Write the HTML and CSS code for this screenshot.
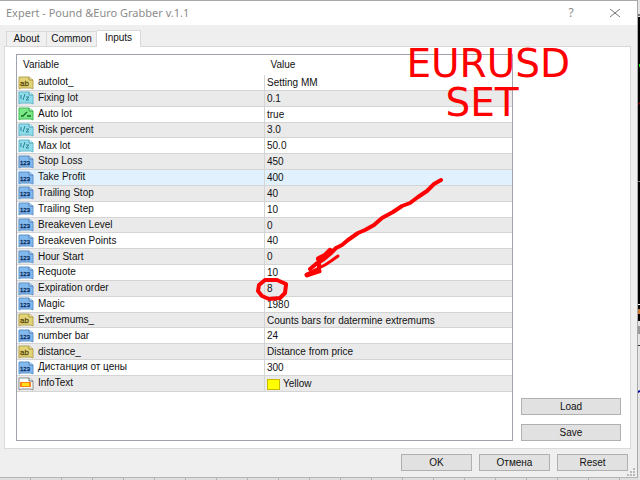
FILE: index.html
```html
<!DOCTYPE html>
<html lang="en">
  <head>
    <meta charset="utf-8">
    <title>Expert - Pound &amp;Euro Grabber v.1.1</title>
    <link rel="stylesheet" href="styles.css">
  </head>
  <body>
    <svg class="sprite" aria-hidden="true">
      <symbol id="ab" viewBox="0 0 16 14">
        <path d="M1 1h10l4 3v9l-2-1H3l-2 1z" fill="#e3d478" stroke="#b5a452"/>
        <path d="M11 1v3h4" fill="#f8efb0" stroke="#a3923f"/>
        <text x="2" y="10" font-size="8" fill="#5d4f13" stroke="#5d4f13" stroke-width=".3">ab</text>
      </symbol>
      <symbol id="half" viewBox="0 0 16 14">
        <path d="M1 1h10l4 3v9l-2-1H3l-2 1z" fill="#8fdcea" stroke="#63b8ca"/>
        <path d="M11 1v3h4" fill="#d4f6fb" stroke="#4ba0b3"/>
        <path d="M3 4v4M7 3L5 9M8 6h3L8 9h3" fill="none" stroke="#2a8297"/>
      </symbol>
      <symbol id="bool" viewBox="0 0 16 14">
        <path d="M1 1h10l4 3v9l-2-1H3l-2 1z" fill="#7be886" stroke="#43b856"/>
        <path d="M11 1v3h4" fill="#c6fbca" stroke="#2f9c44"/>
        <path d="M3 9h2l4-4M9 9h4" fill="none" stroke="#136b24" stroke-width="1.3"/>
      </symbol>
      <symbol id="int" viewBox="0 0 16 14">
        <path d="M1 1h10l4 3v9l-2-1H3l-2 1z" fill="#84b9ee" stroke="#5e93cb"/>
        <path d="M11 1v3h4" fill="#c9e3fc" stroke="#4a7db5"/>
        <text x="2" y="10" font-size="6" fill="#082a5c" stroke="#082a5c" stroke-width=".3">123</text>
      </symbol>
      <symbol id="color" viewBox="0 0 16 14">
        <path d="M1 1h10l4 3v9l-2-1H3l-2 1z" fill="#fff" stroke="#8b8b8b"/>
        <path d="M11 1v3h4" fill="#fff" stroke="#666"/>
        <path d="M2 5h11v5H2z" fill="#ff8412"/>
        <path d="M4 6h7v3H4z" fill="#ffe019"/>
      </symbol>
    </svg>

    <main class="dialog">
      <header class="titlebar">
        <h1>Expert - Pound &amp;Euro Grabber v.1.1</h1>
        <button class="help" aria-label="Help">?</button>
        <button class="close" aria-label="Close">
          <svg width="10" height="8" viewBox="0 0 10 8"><path d="M0 0l10 8M10 0L0 8" stroke="#777"/></svg>
        </button>
      </header>

      <nav class="tabs" role="tablist">
        <button role="tab">About</button>
        <button role="tab">Common</button>
        <button role="tab" class="active" aria-selected="true">Inputs</button>
      </nav>

      <section class="panel">
        <div class="list">
          <table>
            <thead>
              <tr><th>Variable</th><th>Value</th></tr>
            </thead>
            <tbody>
              <tr><td><svg class="icon"><use href="#ab"/></svg>autolot_</td><td>Setting MM</td></tr>
              <tr><td><svg class="icon"><use href="#half"/></svg>Fixing lot</td><td>0.1</td></tr>
              <tr><td><svg class="icon"><use href="#bool"/></svg>Auto lot</td><td>true</td></tr>
              <tr><td><svg class="icon"><use href="#half"/></svg>Risk percent</td><td>3.0</td></tr>
              <tr><td><svg class="icon"><use href="#half"/></svg>Max lot</td><td>50.0</td></tr>
              <tr><td><svg class="icon"><use href="#int"/></svg>Stop Loss</td><td>450</td></tr>
              <tr class="selected"><td><svg class="icon"><use href="#int"/></svg>Take Profit</td><td>400</td></tr>
              <tr><td><svg class="icon"><use href="#int"/></svg>Trailing Stop</td><td>40</td></tr>
              <tr><td><svg class="icon"><use href="#int"/></svg>Trailing Step</td><td>10</td></tr>
              <tr><td><svg class="icon"><use href="#int"/></svg>Breakeven Level</td><td>0</td></tr>
              <tr><td><svg class="icon"><use href="#int"/></svg>Breakeven Points</td><td>40</td></tr>
              <tr><td><svg class="icon"><use href="#int"/></svg>Hour Start</td><td>0</td></tr>
              <tr><td><svg class="icon"><use href="#int"/></svg>Requote</td><td>10</td></tr>
              <tr><td><svg class="icon"><use href="#int"/></svg>Expiration order</td><td>8</td></tr>
              <tr><td><svg class="icon"><use href="#int"/></svg>Magic</td><td>1980</td></tr>
              <tr><td><svg class="icon"><use href="#ab"/></svg>Extremums_</td><td>Counts bars for datermine extremums</td></tr>
              <tr><td><svg class="icon"><use href="#int"/></svg>number bar</td><td>24</td></tr>
              <tr><td><svg class="icon"><use href="#ab"/></svg>distance_</td><td>Distance from price</td></tr>
              <tr><td><svg class="icon"><use href="#int"/></svg>Дистанция от цены</td><td>300</td></tr>
              <tr><td><svg class="icon"><use href="#color"/></svg>InfoText</td><td><span class="swatch"></span>Yellow</td></tr>
            </tbody>
          </table>
        </div>
        <div class="side">
          <button class="btn">Load</button>
          <button class="btn">Save</button>
        </div>
      </section>

      <footer class="actions">
        <button class="btn">OK</button>
        <button class="btn">Отмена</button>
        <button class="btn">Reset</button>
      </footer>
      <svg class="grip" width="8" height="8" fill="#bbb"><path d="M6 0h2v2H6zM3 3h2v2H3zM6 3h2v2H6zM0 6h2v2H0zM3 6h2v2H3zM6 6h2v2H6z"/></svg>
    </main>

    <!-- chart window showing behind the dialog -->
    <svg class="chart-right" viewBox="0 0 2 480" preserveAspectRatio="none" aria-hidden="true">
      <path d="M0 0h2v480H0z" fill="#e3e3e3"/>
      <path d="M0 14h2v2H0z" fill="#777"/>
      <path d="M0 17h2v304H0z" fill="#000"/>
      <path d="M1 64h1v3H1z" fill="#0d0"/>
      <path d="M0 104l2-2v1l-2 2z" fill="#c00"/>
      <path d="M0 181h2v1H0z" fill="#778"/>
      <path d="M0 304h2v1H0z" fill="#fff"/>
      <path d="M0 309h2v5H0z" fill="#c77a30"/>
      <path d="M0 326h2v8H0z" fill="#999"/>
      <path d="M0 345h2v1H0z" fill="#333"/>
      <path d="M0 391l2-1v2l-2 1z" fill="#00a"/>
    </svg>
    <div class="chart-bottom"></div>

    <p class="note">EURUSD<br>SET&nbsp;</p>
    <svg class="marks" viewBox="0 0 200 130" fill="none" stroke="#f00" stroke-linecap="round" stroke-linejoin="round" aria-hidden="true">
      <path stroke-width="4" d="M191 9l-7 4-7 7-9 6-8 6-8 3-9 6-11 6-8 7-9 5-7 3-10 7-6 5-6 3-6 6-6 5-8 5-6 5"/>
      <path stroke-width="6" d="M80 80l-5 5-6 3"/>
      <path stroke-width="4" d="M69 88v12"/>
      <path stroke-width="5" d="M69 100l-6 2-6 2"/>
      <path stroke-width="3" d="M88 85l-7 5-6 4-6 3-12 6"/>
      <path stroke-width="4" d="M36 113l-9-4-12 0-6 5-1 6 4 5 7 3 11-1 5-5 1-8z"/>
    </svg>
  </body>
</html>
```

FILE: styles.css
```css
* {
  box-sizing: border-box;
}

body {
  margin: 0;
  min-height: 100vh;
  display: grid;
  grid-template-columns: 1fr 2px;
  grid-template-rows: 1fr 2px;
  position: relative;
  overflow: hidden;
  font-family: "Liberation Sans", Arial, sans-serif;
  font-size: 10px;
  line-height: 14px;
  color: #111;
}

button {
  font: inherit;
  color: inherit;
  padding: 0;
}

.sprite {
  display: none;
}

.dialog {
  position: relative;
  display: flex;
  flex-direction: column;
  background: #efefef;
  border-top: 1px solid #aaa;
  border-right: 1px solid #aaa;
  border-bottom: 1px solid #b5b5b5;
}

.titlebar {
  display: flex;
  align-items: center;
  height: 24px;
  padding: 0 12px 0 6px;
  background: #fff;
  color: #8c8c8c;
}

.titlebar h1 {
  flex: 1;
  margin: 0;
  font: 11px/16px "Noto Sans", sans-serif;
}

.titlebar button {
  display: flex;
  align-items: center;
  justify-content: center;
  width: 20px;
  height: 20px;
  border: 0;
  background: none;
}

.titlebar .help {
  margin-right: 24px;
  font: 12px/16px "Noto Sans", sans-serif;
}

.tabs {
  display: flex;
  align-items: flex-end;
  height: 21px;
  padding-left: 6px;
}

.tabs button {
  height: 15px;
  width: 41px;
  border: 1px solid #d9d9d9;
  border-bottom: 0;
  background: #f0f0f0;
}

.tabs button + button {
  width: 50px;
  border-left: 0;
}

.tabs button.active {
  position: relative;
  width: 44px;
  height: 17px;
  margin-bottom: -1px;
  padding-bottom: 2px;
  background: #fff;
}

.panel {
  flex: 1;
  display: flex;
  gap: 8px;
  margin: 0 6px 0 4px;
  padding: 7px 9px 7px 11px;
  border: 1px solid #d9d9d9;
  background: #fff;
}

.list {
  flex: 1;
  border: 1px solid #a0a3ab;
}

table {
  width: 100%;
  height: 337px;
  table-layout: fixed;
  border-collapse: collapse;
}

th {
  height: 20px;
  padding: 0 0 0 6px;
  text-align: left;
  font-weight: normal;
}

th:first-child {
  width: 50%;
}

td {
  padding: 0 0 0 2px;
  line-height: 13px;
  border-bottom: 1px solid #d4d4d4;
}

td:first-child {
  padding-left: 1px;
  border-right: 1px solid #d4d4d4;
}

tbody tr:nth-child(even) {
  background: #eaeaea;
}

tbody tr.selected {
  background: #e1f1fd;
}

.icon {
  width: 16px;
  height: 14px;
  margin-right: 4px;
  vertical-align: middle;
}

.swatch {
  display: inline-block;
  width: 13px;
  height: 11px;
  margin-right: 3px;
  border: 1px solid #c9b800;
  background: #ff0;
  vertical-align: middle;
}

.side {
  display: flex;
  flex-direction: column;
  justify-content: flex-end;
  gap: 9px;
  width: 100px;
}

.btn {
  height: 17px;
  border: 1px solid #b0b0b0;
  background: #e1e1e1;
}

.actions {
  display: flex;
  justify-content: flex-end;
  gap: 7px;
  padding: 5px 9px 6px;
}

.actions .btn {
  width: 71px;
}

.grip {
  position: absolute;
  right: 2px;
  bottom: 1px;
}

.chart-right {
  grid-column: 2;
  grid-row: 1 / 3;
  width: 100%;
  height: 100%;
}

.chart-bottom {
  grid-column: 1;
  grid-row: 2;
  background: repeating-linear-gradient(90deg, #dedede 0 30px, #b5b5b5 30px 31px);
}

/* red hand-made notes on top of the window */
.note {
  position: absolute;
  top: 44px;
  right: 70px;
  margin: 0;
  font: 39px/39px "DejaVu Sans", sans-serif;
  text-align: center;
  color: #f00;
}

.marks {
  position: absolute;
  left: 250px;
  top: 171px;
  width: 200px;
  height: 130px;
}
```
